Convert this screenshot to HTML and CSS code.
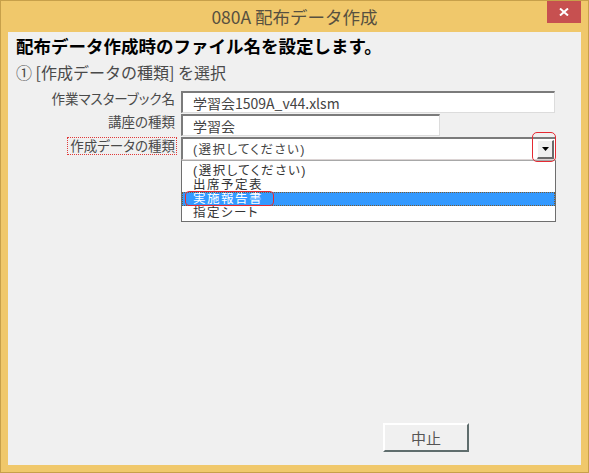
FILE: index.html
```html
<!DOCTYPE html>
<html lang="ja">
<head>
<meta charset="utf-8">
<title>080A 配布データ作成</title>
<link rel="stylesheet" href="styles.css">
</head>
<body>
<div class="window">
  <div class="titlebar">
    <div></div>
    <div class="title">080A 配布データ作成</div>
    <div class="tb-right">
      <div class="close">
        <svg width="10" height="8" viewBox="0 0 10 8"><path d="M1 0.5 L9 7.5 M9 0.5 L1 7.5" stroke="#fff" stroke-width="2" fill="none"/></svg>
      </div>
    </div>
  </div>
  <div class="client">
    <h1 class="heading">配布データ作成時のファイル名を設定します。</h1>
    <div class="section">① [作成データの種類] を選択</div>
    <div class="form">
      <div class="lbl">作業マスターブック名</div>
      <div class="textbox">学習会1509A_v44.xlsm</div>
      <div class="lbl">講座の種類</div>
      <div class="textbox short">学習会</div>
      <div class="lbl focus">作成データの種類</div>
      <div class="combo-wrap">
        <div class="combo">
          <span class="combo-text">(選択してください)</span>
          <span class="dd-btn"><svg width="7" height="4" viewBox="0 0 7 4"><path d="M0 0 H7 L3.5 4 Z" fill="#000"/></svg></span>
        </div>
        <span class="dd-mark"></span>
        <ul class="list">
          <li class="item">(選択してください)</li>
          <li class="item">出席予定表</li>
          <li class="item sel">実施報告書<span class="mark"></span></li>
          <li class="item">指定シート</li>
        </ul>
      </div>
    </div>
    <div class="footer">
      <button class="btn">中止</button>
    </div>
  </div>
</div>
</body>
</html>
```
FILE: styles.css
```css
* { box-sizing: border-box; margin: 0; padding: 0; }
html, body { width: 589px; height: 473px; overflow: hidden; }
body { font-family: "Noto Sans CJK JP", "Noto Sans", sans-serif; background: #fff; }

.window {
  width: 589px; height: 473px;
  background: #F0C86B;
  border: 1px solid #C7A04A;
  padding: 0 7px 7px;
  display: flex; flex-direction: column;
}
.titlebar {
  height: 31px;
  display: grid;
  grid-template-columns: 1fr auto 1fr;
  align-items: start;
}
.title {
  font-size: 17.5px; line-height: 31px;
  color: #575040; white-space: nowrap;
}
.tb-right { display: flex; justify-content: flex-end; }
.close {
  width: 34px; height: 22px;
  background: #C75050;
  display: flex; align-items: center; justify-content: center;
}

.client {
  flex: 1;
  background: #F0F0F0;
  display: flex; flex-direction: column;
  padding-top: 4px;
}
.heading {
  font-size: 17.5px; font-weight: 700; line-height: 20px;
  color: #000; padding-left: 8px;
}
.section {
  margin-top: 6px; padding-left: 8px;
  font-size: 16px; line-height: 20px; color: #4a4a4a;
}

.form {
  margin-top: 9px;
  display: grid;
  grid-template-columns: 167px 375px;
  column-gap: 6px; row-gap: 1px;
  align-items: start;
}
.lbl {
  justify-self: end;
  font-size: 13.5px; line-height: 18px; margin-top: -2px;
  font-feature-settings: "palt"; letter-spacing: 0;
  color: #4a4a4a; white-space: nowrap;
}
.lbl.focus {
  margin-top: 0; height: 18px; line-height: 15px;
  border: 1px dotted #e03a3a;
  padding: 0 1px 0 2px; margin-right: -2px;
}

.textbox {
  width: 374px; height: 22px;
  background: #fff;
  border-top: 2px solid #7b7b7b; border-left: 2px solid #7b7b7b;
  border-right: 1px solid #dcdcdc; border-bottom: 1px solid #dcdcdc;
  padding: 1px 0 0 10px;
  font-size: 14px; line-height: 19px; color: #444;
  display: flex; align-items: center; white-space: nowrap;
}
.textbox.short { width: 259px; }

.combo-wrap { position: relative; width: 375px; }
.combo {
  height: 23px; background: #fff;
  border-top: 2px solid #7b7b7b; border-left: 2px solid #7b7b7b;
  border-right: 1px solid #dcd4d4; border-bottom: 1px solid #dcd4d4;
  padding: 1px 1px 0 10px;
  display: flex; align-items: center; justify-content: space-between;
}
.combo-text {
  font-family: "Liberation Sans", "Noto Sans CJK JP", sans-serif;
  font-size: 12.5px; line-height: 14px; color: #444;
  font-feature-settings: "palt"; letter-spacing: 1.4px; white-space: nowrap;
}
.dd-btn {
  width: 17px; height: 19px; background: #F0F0F0;
  border-top: 1px solid #fff; border-left: 1px solid #fff;
  border-right: 2px solid #6a6a6a; border-bottom: 2px solid #6a6a6a;
  display: flex; align-items: center; justify-content: center;
}
.dd-mark {
  position: absolute; left: 351px; top: -5px;
  width: 24px; height: 30px;
  border: 1.5px solid #e52a32; border-radius: 5px;
}

.list {
  list-style: none;
  height: 62px; background: #fff;
  border: 1px solid #6e6e6e; border-top-color: #a8a8a8;
  padding-top: 3px; overflow: hidden;
}
.item {
  height: 14px; line-height: 14px; padding-left: 11px;
  font-family: "Liberation Sans", "Noto Sans CJK JP", sans-serif;
  font-size: 12.5px; font-feature-settings: "palt"; letter-spacing: 1.5px;
  color: #333; white-space: nowrap;
}
.item.sel {
  position: relative;
  background: #3399FF; color: #fff;
  outline: 1px dotted #7a5a30; outline-offset: -1px;
}
.mark {
  position: absolute; left: 3px; top: -1px;
  width: 89px; height: 15px;
  border: 1.5px solid #e52a32; border-radius: 4px;
}

.footer {
  margin-top: auto;
  padding: 0 0 13px 375px;
}
.btn {
  width: 86px; height: 29px;
  background: #F0F0F0;
  border-top: 2px solid #fff; border-left: 2px solid #fff;
  border-right: 2px solid #5f6d6d; border-bottom: 2px solid #5f6d6d;
  font-family: "Noto Sans CJK JP", "Noto Sans", sans-serif;
  font-size: 15px; color: #555;
}
```
